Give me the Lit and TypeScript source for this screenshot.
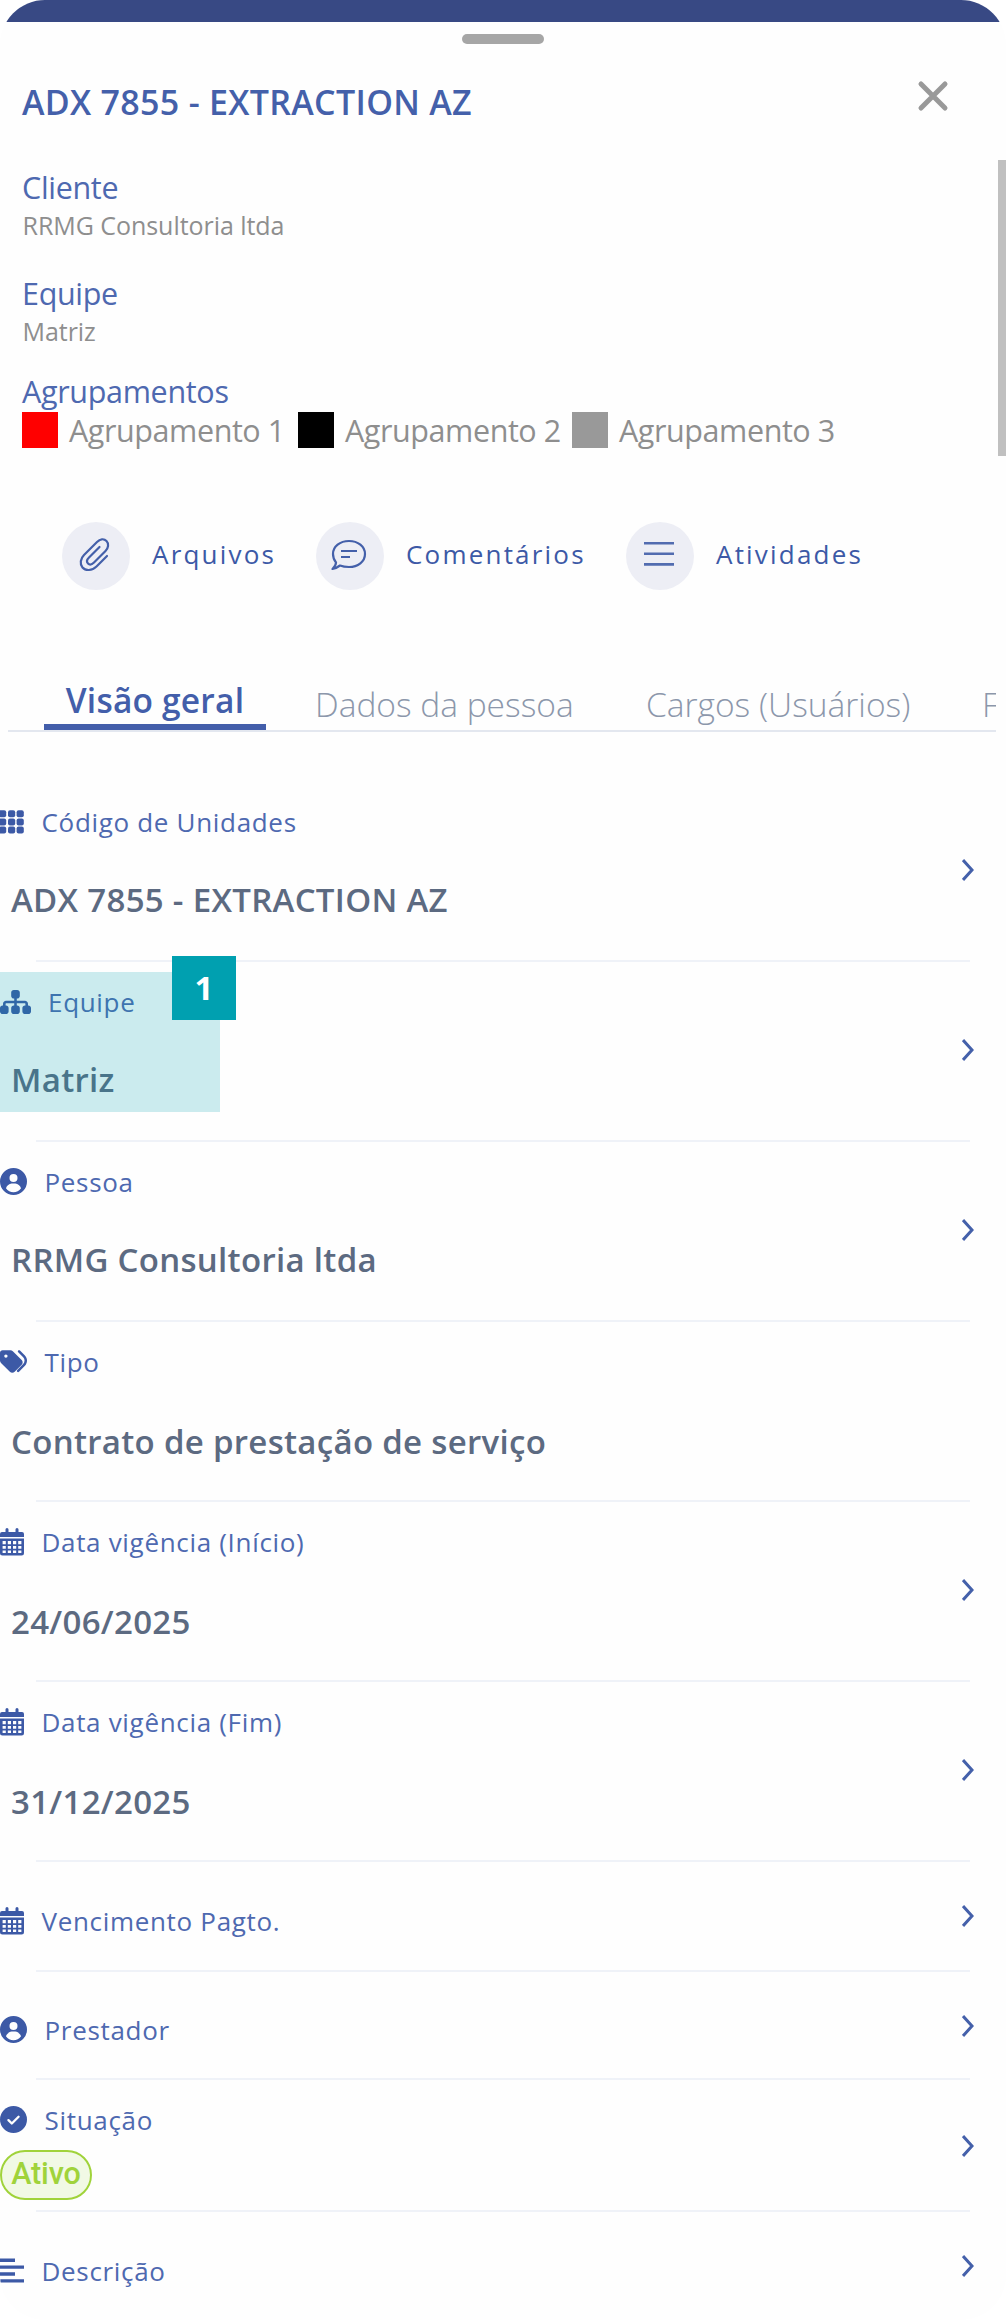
import { LitElement, html, css, svg, nothing } from "lit";
import { customElement } from "lit/decorators.js";
import { classMap } from "lit/directives/class-map.js";

type Icon = { w: number; draw: unknown };

const CALENDAR: Icon = {
  w: 24,
  draw: svg`<svg viewBox="0 0 24 28" width="24" height="28"><g fill="currentColor"><path d="M5.500 1.500a1.500 1.500 0 0 1 3 0V4h7V1.500a1.500 1.500 0 0 1 3 0V4H22a2 2 0 0 1 2 2v3H0V6a2 2 0 0 1 2-2h3.500z"/><path fill-rule="evenodd" d="M0 10.600h24V25a2.500 2.500 0 0 1-2.500 2.500h-19A2.500 2.500 0 0 1 0 25zM2.600 13v3.200h3.200V13zM7.800 13v3.200H11V13zM13 13v3.200h3.200V13zM18.200 13v3.200h3.200V13zM2.600 18v2.800h3.200V18zM7.800 18v2.800H11V18zM13 18v2.800h3.200V18zM18.200 18v2.800h3.200V18zM2.600 22.600v2.400h3.200v-2.400zM7.800 22.600v2.400H11v-2.400zM13 22.600v2.400h3.200v-2.400zM18.200 22.600v2.400h3.200v-2.400z"/></g></svg>`,
};
const PERSON: Icon = {
  w: 27,
  draw: svg`<svg viewBox="0 0 512 512" width="27" height="27"><path fill="currentColor" fill-rule="evenodd" d="M256 0a256 256 0 1 1 0 512 256 256 0 0 1 0-512zM256 112a76 76 0 1 0 0 152 76 76 0 0 0 0-152zM399 384c-19-49-59-82-108-88h-70c-49 6-89 39-108 88 35 49 86 76 143 76s108-27 143-76z"/></svg>`,
};
const GRID: Icon = {
  w: 24,
  draw: svg`<svg viewBox="0 0 24 28" width="24" height="28"><g fill="currentColor">${[2.2, 10.4, 18.6].map((y) =>
    [-1, 8, 16.6].map((x) => svg`<rect x=${x} y=${y} width="7.200" height="7" rx="2"/>`)
  )}</g></svg>`,
};
const SITEMAP: Icon = {
  w: 30.5,
  draw: svg`<svg viewBox="0 0 576 512" width="31" height="28"><path fill="currentColor" d="M208 80c0-26 22-48 48-48h64c26 0 48 22 48 48v64c0 26-22 48-48 48h-8v40h152c30 0 56 26 56 56v32h8c26 0 48 22 48 48v64c0 26-22 48-48 48h-64c-26 0-48-22-48-48v-64c0-26 22-48 48-48h8v-32c0-4-4-8-8-8H312v40h8c26 0 48 22 48 48v64c0 26-22 48-48 48h-64c-26 0-48-22-48-48v-64c0-26 22-48 48-48h8v-40H112c-4 0-8 4-8 8v32h8c26 0 48 22 48 48v64c0 26-22 48-48 48H48c-26 0-48-22-48-48v-64c0-26 22-48 48-48h8v-32c0-30 26-56 56-56h152v-40h-8c-26 0-48-22-48-48z"/></svg>`,
};
const TAGS: Icon = {
  w: 27,
  draw: svg`<svg viewBox="0 0 512 512" width="27" height="28"><path fill="currentColor" fill-rule="evenodd" d="M345 39c9-9 25-9 34 0l94 95c53 54 53 141 0 195L361 443c-9 9-25 9-34 0s-9-25 0-34l112-114c35-35 35-92 0-127l-94-95c-9-9-9-25 0-34zM0 229V80c0-26 22-48 48-48h149c17 0 34 7 46 19l168 168c25 25 25 66 0 91L278 443c-25 25-66 25-91 0L19 275C7 263 0 246 0 229zm144-85a32 32 0 1 0-64 0 32 32 0 0 0 64 0z"/></svg>`,
};
const CHECK: Icon = {
  w: 27,
  draw: svg`<svg viewBox="0 0 512 512" width="27" height="27"><circle cx="256" cy="256" r="256" fill="currentColor"/><path d="M160 268l64 64 128-128" fill="none" stroke="#fff" stroke-width="44" stroke-linecap="round" stroke-linejoin="round"/></svg>`,
};
const LINES: Icon = {
  w: 24,
  draw: svg`<svg viewBox="0 0 24 28" width="24" height="28"><path d="M0 3.300h15M0 10.100h24M0 17h15M0 23.900h24" stroke="currentColor" stroke-width="3.400"/></svg>`,
};

interface Field {
  icon: Icon;
  label: string;
  value?: string;
  kind: string;
  lower?: boolean;
  chevron?: boolean;
  marked?: boolean;
  status?: string;
}

const FIELDS: Field[] = [
  { icon: GRID, label: "Código de Unidades", value: "ADX 7855 - EXTRACTION AZ", kind: "tall" },
  { icon: SITEMAP, label: "Equipe", value: "Matriz", kind: "tall", marked: true },
  { icon: PERSON, label: "Pessoa", value: "RRMG Consultoria ltda", kind: "tall" },
  { icon: TAGS, label: "Tipo", value: "Contrato de prestação de serviço", kind: "tall", lower: true, chevron: false },
  { icon: CALENDAR, label: "Data vigência (Início)", value: "24/06/2025", kind: "tall", lower: true },
  { icon: CALENDAR, label: "Data vigência (Fim)", value: "31/12/2025", kind: "tall", lower: true },
  { icon: CALENDAR, label: "Vencimento Pagto.", kind: "short first" },
  { icon: PERSON, label: "Prestador", kind: "short" },
  { icon: CHECK, label: "Situação", kind: "status", status: "Ativo" },
  { icon: LINES, label: "Descrição", kind: "short last" },
];

@customElement("field-row")
class FieldRow extends LitElement {
  static properties = { field: { attribute: false } };
  declare field: Field;

  static styles = css`
    :host { display: block; }
    .row { position: relative; display: flex; justify-content: space-between; box-sizing: border-box; padding-right: 32px; }
    .row::after { content: ""; position: absolute; left: 36px; right: 36px; bottom: 0; height: 2px; background: #eff2f8; }
    .tall { height: 180px; padding-top: 22px; }
    .short { height: 108px; padding-top: 40px; }
    .first { height: 110px; padding-top: 41px; }
    .last { padding-top: 41px; }
    .last::after { display: none; }
    .status { height: 132px; padding-top: 22px; }
    .head { display: flex; gap: 17.5px; height: 36px; color: #3c59a6; }
    .icon { display: block; height: 28px; margin-top: 3.5px; }
    .icon svg { display: block; overflow: visible; }
    .label { font-size: 26px; line-height: 36px; letter-spacing: 0.68px; color: #4e69b0; white-space: nowrap; }
    .value { margin: 38px 0 0 11px; font-size: 33px; line-height: 44px; font-weight: 600; letter-spacing: 0.3px; color: #5c6a81; white-space: nowrap; }
    .lower { margin-top: 40px; }
    .pill { display: flex; align-items: center; justify-content: center; box-sizing: border-box; width: 92px; height: 50px; margin-top: 12px; border: 2px solid #a0d33b; border-radius: 25px; background: #f1f9e5; color: #a0d33b; font: 500 30.5px/44px Roboto, sans-serif; padding-bottom: 2px; letter-spacing: -0.1px; }
    .chevron { width: 12px; height: 24px; align-self: flex-start; }
    .tall .chevron { margin-top: 54px; }
    .short .chevron { margin-top: 2px; }
    .first .chevron, .last .chevron { margin-top: 1px; }
    .status .chevron { margin-top: 32px; }
    .mark { position: absolute; left: 0; top: 10px; width: 220px; height: 140px; background: rgba(0, 160, 176, 0.2); }
    .badge { position: absolute; left: 172px; top: -6px; width: 64px; height: 64px; z-index: 1; background: #00a0b0; color: #fff; font: 700 33px/63px "Noto Sans", "Open Sans", sans-serif; text-align: center; }
  `;

  render() {
    const f = this.field;
    return html`<div class="row ${f.kind}">
      <div class="main">
        <div class="head"><span class="icon" style="width:${f.icon.w}px">${f.icon.draw}</span><span class="label">${f.label}</span></div>
        ${f.value ? html`<div class=${classMap({ value: true, lower: !!f.lower })}>${f.value}</div>` : nothing}
        ${f.status ? html`<div class="pill">${f.status}</div>` : nothing}
      </div>
      ${f.chevron === false
        ? nothing
        : html`<svg class="chevron" viewBox="0 0 12 24"><path d="M1 2l9 10L1 22" fill="none" stroke="#4460aa" stroke-width="3"/></svg>`}
      ${f.marked ? html`<div class="mark"></div><div class="badge">1</div>` : nothing}
    </div>`;
  }
}

@customElement("app-root")
class AppRoot extends LitElement {
  static styles = css`
    :host { display: block; font-family: "Open Sans", "Noto Sans", sans-serif; }
    .sheet { position: relative; width: 1006px; height: 2320px; overflow: hidden; border-radius: 45px; background: #fefefe; }
    .bar { height: 22px; background: #384984; }
    .handle { width: 82px; height: 10px; margin: 12px auto 0; border-radius: 5px; background: #a6a6a6; }
    .top { display: flex; justify-content: space-between; align-items: flex-start; height: 115px; padding: 36px 57px 0 22px; box-sizing: border-box; }
    .title { margin: 0; font-size: 34px; line-height: 44px; font-weight: 600; letter-spacing: 0.3px; color: #4460aa; white-space: nowrap; }
    .close { width: 32px; height: 32px; }
    .info { display: flex; flex-direction: column; padding-left: 22px; white-space: nowrap; }
    .name { font-size: 30.5px; line-height: 42px; letter-spacing: -0.32px; color: #4e69b0; }
    .text { font-size: 25px; line-height: 34px; letter-spacing: -0.05px; color: #8e8e8e; padding-left: 0.5px; }
    .pair { height: 106px; padding-top: 7px; box-sizing: border-box; }
    .info > .name { margin-top: -1px; }
    .groups { display: flex; height: 36px; line-height: 37px; font-size: 30.5px; letter-spacing: -0.42px; color: #8e8e8e; }
    .group { display: flex; gap: 11px; width: 276px; }
    .group.mid { width: 274px; }
    .swatch { width: 36px; height: 36px; }
    .red { background: #f00; }
    .black { background: #000; }
    .gray { background: #999; }
    .actions { display: flex; height: 68px; margin-top: 74px; padding-left: 62px; color: #3c59a6; }
    .action { display: flex; align-items: center; gap: 22px; width: 254px; font-size: 26px; letter-spacing: 2.2px; white-space: nowrap; }
    .action.wide { width: 310px; }
    .name-of { padding-bottom: 4px; }
    .round { flex: none; width: 68px; height: 68px; border-radius: 50%; background: #edeef5; }
    .round svg { display: block; }
    .tabs { display: flex; width: 988px; height: 142px; margin-left: 8px; box-sizing: border-box; border-bottom: 2px solid #e3e7ef; overflow: hidden; padding: 88px 0 0 36px; white-space: nowrap; }
    .tab { flex: none; font-size: 33.5px; line-height: 46px; padding-top: 3px; font-weight: 300; color: #8c97ab; }
    .tab.on { box-sizing: border-box; width: 222px; height: 52px; padding-top: 0; margin-right: 49px; text-align: center; font-size: 33.5px; letter-spacing: 0.2px; line-height: 45px; font-weight: 600; color: #435eaa; border-bottom: 6px solid #435eaa; }
    .persona { width: 331px; }
    .roles { width: 336px; }
    .list { padding-top: 50px; }
    .scroll { position: absolute; right: 0; top: 160px; width: 8px; height: 296px; background: #c0c0c0; }
  `;

  render() {
    return html`<div class="sheet">
      <div class="bar"></div>
      <div class="handle"></div>
      <div class="top">
        <h1 class="title">ADX 7855 - EXTRACTION AZ</h1>
        <svg class="close" viewBox="0 0 32 32"><path d="M4 4l24 24M28 4l-24 24" stroke="#999" stroke-width="5" stroke-linecap="round"/></svg>
      </div>
      <div class="info">
        <div class="pair"><div class="name">Cliente</div><div class="text">RRMG Consultoria ltda</div></div>
        <div class="pair"><div class="name">Equipe</div><div class="text">Matriz</div></div>
        <div class="name">Agrupamentos</div>
        <div class="groups">
          <div class="group"><span class="swatch red"></span>Agrupamento 1</div>
          <div class="group mid"><span class="swatch black"></span>Agrupamento 2</div>
          <div class="group"><span class="swatch gray"></span>Agrupamento 3</div>
        </div>
      </div>
      <div class="actions">
        <div class="action">
          <span class="round"><svg width="68" height="68" viewBox="0 0 68 68" fill="none" stroke="#4460aa" stroke-width="2.200" stroke-linecap="round"><path d="M45 34L34.500 44.500C30 49 23.500 49 20.500 45.500C17.500 42 18.500 36.500 22 33L35 20C38 17 42 16.500 44.500 19C47 21.500 46.500 26 43.500 29L32 40.500C30 42.500 27.500 43 26 41.500C24.500 40 25 37.500 27 35.500L37.500 25"/></svg></span><span class="name-of">Arquivos</span>
        </div>
        <div class="action wide">
          <span class="round"><svg width="68" height="68" viewBox="0 0 68 68" fill="none" stroke="#4460aa" stroke-width="2.200" stroke-linejoin="round"><path d="M33 19C42 19 49 24.500 49 32C49 39.500 42 45 33 45C29.500 45 26.500 44.500 24 43.500C22 45 19.500 46.500 16.500 47C18.500 45 20 42.500 20 40.500C18 38 17 35 17 32C17 24.500 24 19 33 19zM25 29h16M25 35h9"/></svg></span><span class="name-of">Comentários</span>
        </div>
        <div class="action">
          <span class="round"><svg width="68" height="68" viewBox="0 0 68 68" stroke="#526cb0" stroke-width="2.600"><path d="M18 21.200h30M18 31.800h30M18 42.400h30"/></svg></span><span class="name-of">Atividades</span>
        </div>
      </div>
      <div class="tabs">
        <div class="tab on">Visão geral</div>
        <div class="tab persona">Dados da pessoa</div>
        <div class="tab roles">Cargos (Usuários)</div>
        <div class="tab">F</div>
      </div>
      <div class="list">${FIELDS.map((f) => html`<field-row .field=${f}></field-row>`)}</div>
      <div class="scroll"></div>
    </div>`;
  }
}
